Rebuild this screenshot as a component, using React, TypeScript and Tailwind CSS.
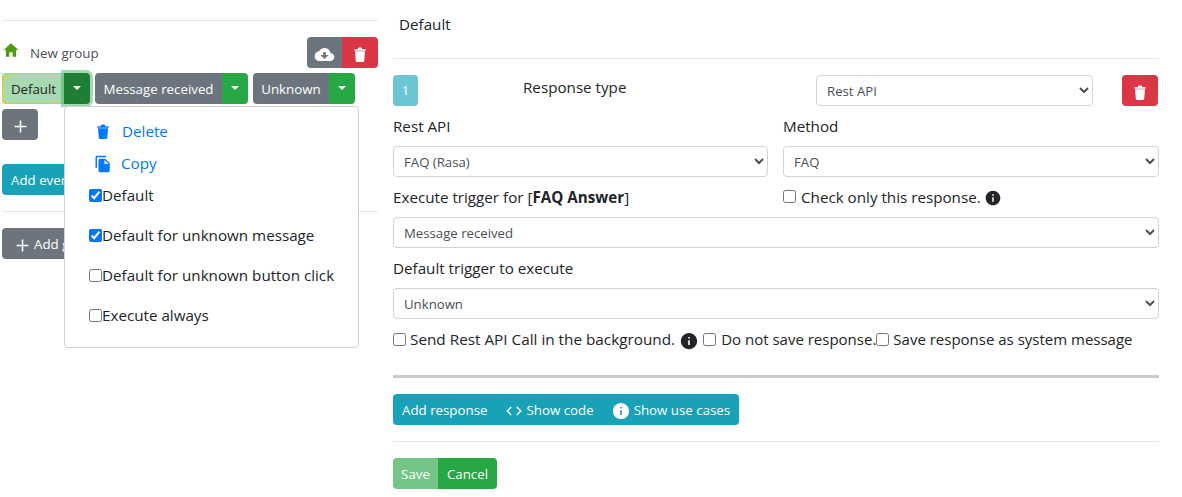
import { IoMdCloudDownload, IoMdHome, IoMdAdd, IoMdCode, IoMdInformationCircle } from "react-icons/io";
import { MdFileCopy } from "react-icons/md";

const font = "font-['Open_Sans','Noto_Sans',sans-serif]";

function Caret() {
  return <span className="block w-0 h-0 mb-[2px] border-x-[4px] border-x-transparent border-t-[4px] border-t-white" />;
}

function Trash({ className = "" }: { className?: string }) {
  return (
    <svg viewBox="0 0 12 15" width="12" height="15" fill="currentColor" className={className}>
      <path d="M0.3 2.2H3.6L4.4 0.6H7.6L8.4 2.2H11.7V3.7H0.3Z" />
      <path d="M1 4.3H11L10.2 13.9A1.2 1.2 0 0 1 9 15H3A1.2 1.2 0 0 1 1.8 13.9Z" />
    </svg>
  );
}

function Split({ label, wl, active }: { label: string; wl: string; active?: boolean }) {
  return (
    <div className="flex h-[31px] text-[13.3px]">
      <span className={active
        ? `${wl} flex items-center justify-center pt-[2px] rounded-l-[4px] bg-[#a8d9b0] border border-[#ffc107] border-r-0 text-[#212529]`
        : `${wl} flex items-center justify-center pt-[2px] rounded-l-[4px] bg-[#6c757d] text-white`}>{label}</span>
      <span className={active
        ? "w-[26px] flex items-center justify-center rounded-r-[4px] bg-[#1e7e34] shadow-[0_0_0_3px_rgba(72,180,97,0.5)]"
        : "w-[26px] flex items-center justify-center rounded-r-[4px] bg-[#28a745]"}><Caret /></span>
    </div>
  );
}

function Select({ value, className = "" }: { value: string; className?: string }) {
  return (
    <select defaultValue={value} className={`h-[31px] rounded-[4px] border border-[#ced4da] bg-white pl-[6px] pr-1 text-[13.2px] text-[#495057] ${className}`}>
      <option>{value}</option>
    </select>
  );
}

function Check({ label, checked, className = "" }: { label: string; checked?: boolean; className?: string }) {
  return (
    <label className={`flex items-center ${className}`}>
      <input type="checkbox" defaultChecked={checked} className="w-[13px] h-[13px] m-0" />
      <span>{label}</span>
    </label>
  );
}

export default function App() {
  return (
    <div className={`${font} flex w-[1182px] h-[497px] overflow-hidden bg-white text-[15.2px] text-[#212529]`}>
      <div className="relative w-[376px] ml-[2px] shrink-0 pt-[20px]">
        <div className="border-t border-[#e5e5e5]" />
        <div className="flex items-center justify-between h-[31px] mt-[16px]">
          <div className="flex items-center">
            <IoMdHome className="text-[#4f9a0f] mb-[6px]" size={18} />
            <span className="ml-[10px] text-[13.4px] text-[#495057] mt-[2px]">New group</span>
          </div>
          <div className="flex h-[31px]">
            <span className="w-[35px] pt-[4px] flex items-center justify-center rounded-l-[4px] bg-[#6c757d] text-white"><IoMdCloudDownload size={21} /></span>
            <span className="w-[36px] pt-[4px] flex items-center justify-center rounded-r-[4px] bg-[#dc3545] text-white"><Trash /></span>
          </div>
        </div>
        <div className="flex gap-[5px] mt-[5px]">
          <Split label="Default" wl="w-[62px]" active />
          <Split label="Message received" wl="w-[127px]" />
          <Split label="Unknown" wl="w-[76px]" />
        </div>
        <button className="mt-[5px] w-[36px] h-[31px] pt-[3px] rounded-[4px] bg-[#6c757d] text-white flex items-center justify-center"><IoMdAdd size={19} /></button>
        <button className="mt-[24px] w-[150px] h-[31px] pt-[2px] rounded-[4px] bg-[#17a2b8] text-white text-[13.3px] text-left pl-[9px]">Add event</button>
        <div className="border-t border-[#e5e5e5] mt-[16px]" />
        <button className="mt-[16px] w-[150px] h-[31px] pt-[2px] rounded-[4px] bg-[#6c757d] text-white text-[13.3px] flex items-center pl-[11px] gap-[2px]"><IoMdAdd size={19} className="mt-[1px]" />Add group</button>

        <div className="absolute left-[62px] top-[106px] w-[295px] h-[242px] rounded-[4px] border border-[#d0d0d0] bg-white pl-[24px]">
          <div className="flex items-center h-[20px] mt-[14px] text-[#007bff]">
            <Trash className="ml-[8px] mt-[1px]" /><span className="ml-[13px]">Delete</span>
          </div>
          <div className="flex items-center h-[20px] mt-[12px] text-[#007bff]">
            <MdFileCopy size={18} className="ml-[5px] mt-[1px]" /><span className="ml-[9px]">Copy</span>
          </div>
          <Check label="Default" checked className="h-[20px] mt-[12px]" />
          <Check label="Default for unknown message" checked className="h-[20px] mt-[20px]" />
          <Check label="Default for unknown button click" className="h-[20px] mt-[20px]" />
          <Check label="Execute always" className="h-[20px] mt-[20px]" />
        </div>
      </div>

      <div className="w-[766px] ml-[15px] shrink-0">
        <div className="h-[59px] border-b border-[#e5e5e5] pl-[6px] pt-[13px]">Default</div>
        <div className="flex h-[31px] mt-[16px]">
          <span className="w-[25px] flex items-center justify-center rounded-[4px] bg-[#6cc5d5] text-white text-[13px] pt-[1px]">1</span>
          <span className="ml-[105px] w-[293px] mt-[1px]">Response type</span>
          <Select value="Rest API" className="w-[277px]" />
          <span className="ml-[29px] w-[36px] pt-[4px] flex items-center justify-center rounded-[4px] bg-[#dc3545] text-white"><Trash /></span>
        </div>
        <div className="flex gap-[15px] mt-[9px]">
          <div className="w-[375px]">
            <div className="h-[31px]">Rest API</div>
            <Select value="FAQ (Rasa)" className="w-full" />
          </div>
          <div className="w-[376px]">
            <div className="h-[31px]">Method</div>
            <Select value="FAQ" className="w-full" />
          </div>
        </div>
        <div className="flex gap-[15px] h-[40px] items-center">
          <div className="w-[375px]">Execute trigger for [<b>FAQ Answer</b>]</div>
          <div className="flex items-center">
            <Check label="" />
            <span className="ml-[5px]">Check only this response.</span>
            <IoMdInformationCircle size={18} className="ml-[3px] mt-[2px] text-[#212529]" />
          </div>
        </div>
        <Select value="Message received" className="w-full" />
        <div className="h-[40px] flex items-center">Default trigger to execute</div>
        <Select value="Unknown" className="w-full" />
        <div className="flex items-center h-[41px]">
          <Check label="" />
          <span className="ml-[4px] text-[15.3px]">Send Rest API Call in the background.</span>
          <IoMdInformationCircle size={20} className="ml-[4px] mt-[2px] text-[#212529]" />
          <Check label="" className="ml-[4px]" />
          <span className="ml-[5px] text-[15px]">Do not save response.</span>
          <Check label="" />
          <span className="ml-[4px] text-[15px]">Save response as system message</span>
        </div>
        <div className="border-t-[3px] border-[#cccccc] mt-[15px]" />
        <div className="mt-[16px] inline-flex items-center h-[31px] w-[346px] pt-[2px] rounded-[4px] bg-[#17a2b8] text-white text-[13.3px] pl-[9px]">
          <span>Add response</span>
          <IoMdCode size={18} className="ml-[18px]" />
          <span className="ml-[3px]">Show code</span>
          <IoMdInformationCircle size={20} className="ml-[17px]" />
          <span className="ml-[3px]">Show use cases</span>
        </div>
        <div className="border-t border-[#e5e5e5] mt-[16px]" />
        <div className="flex h-[31px] mt-[16px] text-[13.3px] text-white">
          <span className="w-[45px] pt-[2px] flex items-center justify-center rounded-l-[4px] bg-[#74c687]">Save</span>
          <span className="w-[59px] pt-[2px] flex items-center justify-center rounded-r-[4px] bg-[#28a745]">Cancel</span>
        </div>
      </div>
    </div>
  );
}
